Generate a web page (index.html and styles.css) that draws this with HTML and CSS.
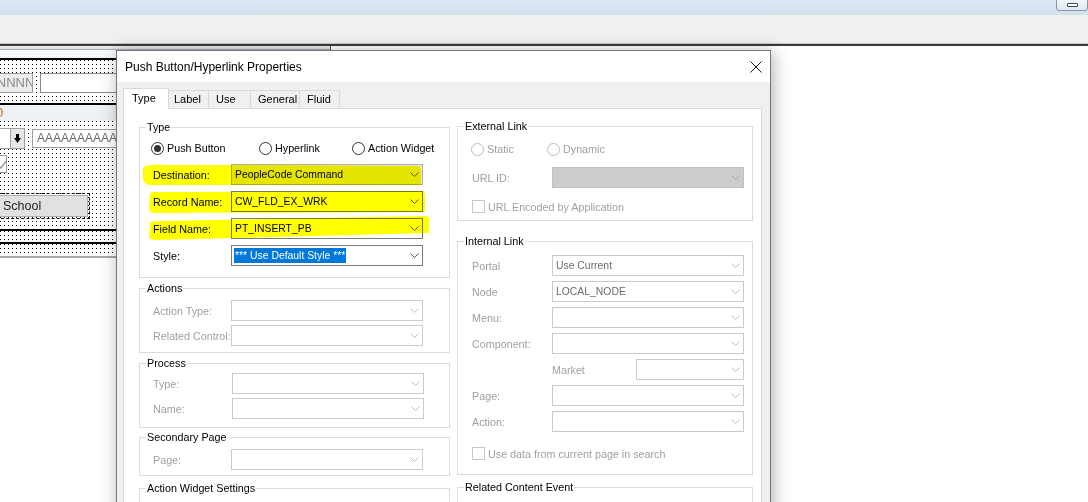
FILE: index.html
```html
<!DOCTYPE html>
<html>
<head>
<meta charset="utf-8">
<link rel="stylesheet" href="styles.css">
</head>
<body>
<div class="topbar"><div class="winbtn"><span class="winbtn-icon"></span></div></div>
<div class="toolbar"></div>
<div class="workspace">
  <div class="canvas-win">
    <div class="canvas-head"></div>
    <div class="canvas-top"></div>
    <div class="hl"></div>
    <div class="dots dots-a">
      <div class="nbox">NNNNNNNN</div>
      <div class="ibox"></div>
    </div>
    <div class="hl"></div>
    <div class="band"><span class="zero">0</span></div>
    <div class="dots dots-b">
      <div class="ddrow">
        <div class="ddwhite"></div>
        <div class="ddbtn"><svg width="7" height="9" viewBox="0 0 7 9"><polygon points="2,0 5,0 5,4 7,4 3.5,9 0,4 2,4" fill="#000"/></svg></div>
        <div class="abox">AAAAAAAAAAAA</div>
      </div>
      <div class="chk"><svg width="18" height="16" viewBox="0 0 18 16"><polyline points="8,9 11,12 16,5" fill="none" stroke="#9a9a9a" stroke-width="1.4"/></svg></div>
      <div class="school-wrap"><div class="school">School</div></div>
    </div>
    <div class="hl"></div>
    <div class="dots dots-c"></div>
    <div class="hl"></div>
    <div class="dots dots-d"></div>
    <div class="canvas-bottom"></div>
  </div>
</div>

<div class="dialog">
  <div class="dlg-title">
    <span>Push Button/Hyperlink Properties</span>
    <svg class="close" width="12" height="12" viewBox="0 0 12 12"><path d="M0.5,0.5 L11.5,11.5 M11.5,0.5 L0.5,11.5" stroke="#1a1a1a" stroke-width="1" fill="none"/></svg>
  </div>
  <div class="dlg-body">
    <div class="tabs">
      <div class="tab active t-type">Type</div>
      <div class="tab t-label">Label</div>
      <div class="tab t-use">Use</div>
      <div class="tab t-general">General</div>
      <div class="tab t-fluid">Fluid</div>
    </div>
    <div class="tabpage">
      <div class="col col-l">
        <div class="group g-type">
          <span class="gtitle">Type</span>
          <div class="radios">
            <div class="radio r1"><span class="circ on"></span>Push Button</div>
            <div class="radio r2"><span class="circ"></span>Hyperlink</div>
            <div class="radio"><span class="circ"></span>Action Widget</div>
          </div>
          <div class="frow first">
            <span class="flabel">Destination:</span>
            <div class="sel sel-list"><span>PeopleCode Command</span><svg class="chev" width="9" height="5" viewBox="0 0 9 5"><polyline points="0.5,0.5 4.5,4.5 8.5,0.5" fill="none" stroke="#555" stroke-width="1"/></svg></div>
          </div>
          <div class="frow">
            <span class="flabel">Record Name:</span>
            <div class="sel"><span>CW_FLD_EX_WRK</span><svg class="chev" width="9" height="5" viewBox="0 0 9 5"><polyline points="0.5,0.5 4.5,4.5 8.5,0.5" fill="none" stroke="#555" stroke-width="1"/></svg></div>
          </div>
          <div class="frow">
            <span class="flabel">Field Name:</span>
            <div class="sel"><span>PT_INSERT_PB</span><svg class="chev" width="9" height="5" viewBox="0 0 9 5"><polyline points="0.5,0.5 4.5,4.5 8.5,0.5" fill="none" stroke="#555" stroke-width="1"/></svg></div>
          </div>
          <div class="frow">
            <span class="flabel">Style:</span>
            <div class="sel"><span class="picked">*** Use Default Style ***</span><svg class="chev" width="9" height="5" viewBox="0 0 9 5"><polyline points="0.5,0.5 4.5,4.5 8.5,0.5" fill="none" stroke="#555" stroke-width="1"/></svg></div>
          </div>
        </div>

        <div class="group g-actions">
          <span class="gtitle">Actions</span>
          <div class="frow dis">
            <span class="flabel">Action Type:</span>
            <div class="sel off"><span></span><svg class="chev" width="9" height="5" viewBox="0 0 9 5"><polyline points="0.5,0.5 4.5,4.5 8.5,0.5" fill="none" stroke="#bdbdbd" stroke-width="1"/></svg></div>
          </div>
          <div class="frow dis tight">
            <span class="flabel">Related Control:</span>
            <div class="sel off"><span></span><svg class="chev" width="9" height="5" viewBox="0 0 9 5"><polyline points="0.5,0.5 4.5,4.5 8.5,0.5" fill="none" stroke="#bdbdbd" stroke-width="1"/></svg></div>
          </div>
        </div>

        <div class="group g-process">
          <span class="gtitle">Process</span>
          <div class="frow dis shift">
            <span class="flabel">Type:</span>
            <div class="sel off"><span></span><svg class="chev" width="9" height="5" viewBox="0 0 9 5"><polyline points="0.5,0.5 4.5,4.5 8.5,0.5" fill="none" stroke="#bdbdbd" stroke-width="1"/></svg></div>
          </div>
          <div class="frow dis shift tight">
            <span class="flabel">Name:</span>
            <div class="sel off"><span></span><svg class="chev" width="9" height="5" viewBox="0 0 9 5"><polyline points="0.5,0.5 4.5,4.5 8.5,0.5" fill="none" stroke="#bdbdbd" stroke-width="1"/></svg></div>
          </div>
        </div>

        <div class="group g-secondary">
          <span class="gtitle">Secondary Page</span>
          <div class="frow dis">
            <span class="flabel">Page:</span>
            <div class="sel off"><span></span><svg class="chev" width="9" height="5" viewBox="0 0 9 5"><polyline points="0.5,0.5 4.5,4.5 8.5,0.5" fill="none" stroke="#bdbdbd" stroke-width="1"/></svg></div>
          </div>
        </div>

        <div class="group g-widget">
          <span class="gtitle">Action Widget Settings</span>
        </div>
      </div>

      <div class="col col-r">
        <div class="group g-external">
          <span class="gtitle">External Link</span>
          <div class="radios r-ext dis">
            <div class="radio r-static"><span class="circ off"></span>Static</div>
            <div class="radio"><span class="circ off"></span>Dynamic</div>
          </div>
          <div class="frow dis rrow url">
            <span class="flabel">URL ID:</span>
            <div class="sel grey"><span></span><svg class="chev" width="9" height="5" viewBox="0 0 9 5"><polyline points="0.5,0.5 4.5,4.5 8.5,0.5" fill="none" stroke="#a8a8a8" stroke-width="1"/></svg></div>
          </div>
          <div class="crow dis c-ext"><span class="cbox"></span>URL Encoded by Application</div>
        </div>

        <div class="group g-internal">
          <span class="gtitle">Internal Link</span>
          <div class="frow dis rrow">
            <span class="flabel">Portal</span>
            <div class="sel off"><span class="val">Use Current</span><svg class="chev" width="9" height="5" viewBox="0 0 9 5"><polyline points="0.5,0.5 4.5,4.5 8.5,0.5" fill="none" stroke="#bdbdbd" stroke-width="1"/></svg></div>
          </div>
          <div class="frow dis rrow gap5">
            <span class="flabel">Node</span>
            <div class="sel off"><span class="val">LOCAL_NODE</span><svg class="chev" width="9" height="5" viewBox="0 0 9 5"><polyline points="0.5,0.5 4.5,4.5 8.5,0.5" fill="none" stroke="#bdbdbd" stroke-width="1"/></svg></div>
          </div>
          <div class="frow dis rrow gap5">
            <span class="flabel">Menu:</span>
            <div class="sel off"><span></span><svg class="chev" width="9" height="5" viewBox="0 0 9 5"><polyline points="0.5,0.5 4.5,4.5 8.5,0.5" fill="none" stroke="#bdbdbd" stroke-width="1"/></svg></div>
          </div>
          <div class="frow dis rrow gap5">
            <span class="flabel">Component:</span>
            <div class="sel off"><span></span><svg class="chev" width="9" height="5" viewBox="0 0 9 5"><polyline points="0.5,0.5 4.5,4.5 8.5,0.5" fill="none" stroke="#bdbdbd" stroke-width="1"/></svg></div>
          </div>
          <div class="frow dis rrow gap5">
            <span class="flabel"></span>
            <span class="mlabel">Market</span>
            <div class="sel off small"><span></span><svg class="chev" width="9" height="5" viewBox="0 0 9 5"><polyline points="0.5,0.5 4.5,4.5 8.5,0.5" fill="none" stroke="#bdbdbd" stroke-width="1"/></svg></div>
          </div>
          <div class="frow dis rrow gap5">
            <span class="flabel">Page:</span>
            <div class="sel off"><span></span><svg class="chev" width="9" height="5" viewBox="0 0 9 5"><polyline points="0.5,0.5 4.5,4.5 8.5,0.5" fill="none" stroke="#bdbdbd" stroke-width="1"/></svg></div>
          </div>
          <div class="frow dis rrow gap5">
            <span class="flabel">Action:</span>
            <div class="sel off"><span></span><svg class="chev" width="9" height="5" viewBox="0 0 9 5"><polyline points="0.5,0.5 4.5,4.5 8.5,0.5" fill="none" stroke="#bdbdbd" stroke-width="1"/></svg></div>
          </div>
          <div class="crow dis c-int"><span class="cbox"></span>Use data from current page in search</div>
        </div>

        <div class="group g-related">
          <span class="gtitle">Related Content Event</span>
        </div>
      </div>
    </div>
  </div>
</div>

<svg class="marker" width="1088" height="502" viewBox="0 0 1088 502">
  <path d="M143,168 Q146,164 160,165 L232,165 L418,166 Q422,167 421,172 L421,185 L150,185 Q143,184 143,178 Z" fill="#ffff00"/>
  <path d="M150,194 Q151,191 160,192 L423,191 Q425,192 425,196 L425,212 L153,213 Q149,212 149,208 Z" fill="#ffff00"/>
  <path d="M150,223 Q150,221 158,221 L427,216 Q429,217 429,220 L429,233 L156,240 Q149,240 149,236 Z" fill="#ffff00"/>
</svg>
</body>
</html>
```

FILE: styles.css
```css
* { box-sizing: border-box; }
html, body { margin: 0; padding: 0; }
body {
  width: 1088px;
  height: 502px;
  overflow: hidden;
  position: relative;
  background: #fff;
  font-family: "Liberation Sans", Arial, sans-serif;
  color: #000;
}

/* ---------- host window chrome ---------- */
.topbar {
  height: 15px;
  background: linear-gradient(#dfe8f4, #d4dfee);
  display: flex;
  justify-content: flex-end;
}
.winbtn {
  width: 32px;
  height: 12px;
  margin-top: -1px;
  border: 1px solid #8596ad;
  border-radius: 0 0 3px 3px;
  background: linear-gradient(#f5f8fc, #dfe7f1);
  display: flex;
  justify-content: center;
  padding-top: 3px;
}
.winbtn-icon {
  width: 11px;
  height: 4px;
  border: 1px solid #3e4b5e;
  border-radius: 1px;
  background: #fff;
}
.toolbar {
  height: 29px;
  background: #f0f0f0;
  border-bottom: 1px solid #c5c5c5;
}
.workspace {
  border-top: 2px solid #3b3b3b;
  display: flex;
}

/* ---------- page designer canvas ---------- */
.canvas-win {
  width: 331px;
  border-right: 1px solid #5a5a5a;
  display: flex;
  flex-direction: column;
}
.canvas-head {
  height: 4px;
  background: linear-gradient(#eef1f4, #d9dee4);
  border-bottom: 1px solid #a9b0b8;
}
.canvas-top { height: 8px; background: #f6f8fa; }
.hl { height: 2px; background: #000; }
.dots {
  background-color: #fff;
  background-image: conic-gradient(from 270deg at 1px 1px, #000 90deg, transparent 0);
  background-size: 4px 4px;
}
.dots-a {
  height: 43px;
  padding-top: 13px;
  display: flex;
  align-items: flex-start;
}
.nbox {
  margin-left: -24px;
  width: 57px;
  height: 20px;
  border: 1px solid #9a9a9a;
  background: #ececec;
  color: #8a8a8a;
  font-size: 13px;
  line-height: 18px;
  overflow: hidden;
  white-space: nowrap;
  padding-left: 1px;
}
.ibox {
  margin-left: 7px;
  width: 120px;
  height: 20px;
  border: 1px solid #8a8a8a;
  background: #fff;
}
.band {
  height: 16px;
  background: #eef1f4;
  font-size: 13px;
  line-height: 16px;
  color: #c0661f;
}
.zero { margin-left: -4px; }
.dots-b {
  height: 108px;
  padding-top: 7px;
  display: flex;
  flex-direction: column;
  align-items: flex-start;
}
.ddrow { display: flex; height: 21px; }
.ddwhite {
  margin-left: -20px;
  width: 30px;
  height: 21px;
  border: 1px solid #a0a0a0;
  border-right: none;
  background: #fff;
}
.ddbtn {
  width: 15px;
  height: 21px;
  border: 1px solid #a0a0a0;
  background: #e6e6e6;
  display: flex;
  align-items: center;
  justify-content: center;
}
.abox {
  margin-left: 7px;
  margin-top: 1px;
  width: 100px;
  height: 19px;
  border: 1px solid #a0a0a0;
  background: #fff;
  color: #6e6e6e;
  font-size: 12px;
  line-height: 17px;
  padding-left: 4px;
  white-space: nowrap;
  overflow: hidden;
}
.chk {
  margin-top: 6px;
  margin-left: -11px;
  width: 18px;
  height: 18px;
  border: 1px solid #9a9a9a;
  background: #fff;
}
.school-wrap {
  margin-top: 20px;
  margin-left: -4px;
  width: 94px;
  height: 26px;
  border: 1px dashed #000;
  padding: 1px;
}
.school {
  width: 89px;
  height: 22px;
  margin-left: 1px;
  border: 1px solid #adadad;
  background: #e1e1e1;
  font-size: 12.5px;
  line-height: 20px;
  padding-left: 3px;
  color: #1e1e1e;
}
.dots-c { height: 11px; }
.dots-d { height: 12px; }
.canvas-bottom { height: 2px; background: #a8a8a8; }

/* ---------- dialog ---------- */
.dialog {
  position: absolute;
  left: 116px;
  top: 50px;
  width: 655px;
  height: 470px;
  border: 1px solid #767676;
  background: #f0f0f0;
  box-shadow: 2px 2px 16px rgba(0, 0, 0, 0.32);
}
.dlg-title {
  height: 31px;
  background: #fff;
  display: flex;
  align-items: center;
  justify-content: space-between;
  padding: 0 8px;
  font-size: 12px;
}
.dlg-body {
  padding: 6px 0 0 6px;
  font-size: 10.75px;
}
.tabs {
  display: flex;
  align-items: flex-end;
  height: 20px;
  position: relative;
  z-index: 1;
}
.tab {
  height: 18px;
  border: 1px solid #d9d9d9;
  border-bottom: none;
  background: #f0f0f0;
  line-height: 16px;
  padding-left: 7px;
  margin-left: -1px;
  white-space: nowrap;
  font-size: 11px;
}
.tab.active {
  height: 21px;
  margin-bottom: -1px;
  margin-left: 0;
  background: #fff;
  line-height: 18px;
  padding-left: 8px;
}
.t-type { width: 46px; }
.t-label { width: 41px; padding-left: 5px; }
.t-use { width: 43px; }
.t-general { width: 50px; }
.t-fluid { width: 41px; }
.tabpage {
  width: 639px;
  height: 420px;
  border: 1px solid #d9d9d9;
  background: #fff;
  display: flex;
  align-items: flex-start;
  gap: 7px;
  padding: 18px 0 0 15px;
}
.col { display: flex; flex-direction: column; }
.col-l { width: 311px; }
.col-r { width: 296px; margin-top: -1px; }

.group {
  position: relative;
  border: 1px solid #dcdcdc;
}
.gtitle {
  position: absolute;
  top: -7px;
  left: 6px;
  padding: 0 1px;
  background: #fff;
  line-height: 13px;
  white-space: nowrap;
}
.g-type { padding: 12px 0 11px; }
.g-actions { margin-top: 10px; padding: 11px 0 6px; }
.g-process { margin-top: 10px; padding: 9px 0 8px; }
.g-secondary { margin-top: 9px; padding: 11px 0 5px; }
.g-widget { margin-top: 12px; height: 60px; }
.g-external { padding: 14px 0 7px; }
.g-internal { margin-top: 20px; padding: 13px 0 14px; }
.g-related { margin-top: 12px; height: 60px; }

.radios {
  display: flex;
  align-items: center;
  height: 16px;
  padding-left: 11px;
  white-space: nowrap;
}
.radio { display: flex; align-items: center; }
.r1 { width: 108px; }
.r2 { width: 93px; }
.r-ext { padding-left: 13px; }
.r-static { width: 76px; }
.circ {
  width: 13px;
  height: 13px;
  border: 1px solid #333;
  border-radius: 50%;
  margin-right: 3px;
  display: flex;
  align-items: center;
  justify-content: center;
  background: #fff;
}
.circ.on::after {
  content: "";
  width: 7px;
  height: 7px;
  border-radius: 50%;
  background: #333;
}
.circ.off { border-color: #bcbcbc; }

.frow {
  display: flex;
  align-items: center;
  height: 21px;
  padding-left: 13px;
  margin-top: 6px;
  white-space: nowrap;
}
.frow.first { margin-top: 8px; }
.g-actions .frow:first-of-type,
.g-process .frow:first-of-type,
.g-secondary .frow:first-of-type { margin-top: 0; }
.frow.tight { margin-top: 4px; }
.flabel { width: 78px; flex-shrink: 0; }
.shift .flabel { width: 79px; }
.sel {
  width: 192px;
  height: 21px;
  flex-shrink: 0;
  border: 1px solid #7a7a7a;
  background: #fff;
  display: flex;
  align-items: center;
  justify-content: space-between;
  padding: 0 3px 0 3px;
  font-size: 10.4px;
  white-space: nowrap;
}
.sel-list { background: #e5e5e5; border-color: #adadad; }
.sel.off { border-color: #cbcbcb; }
.sel.grey { background: #cccccc; border-color: #c0c0c0; }
.sel.small { width: 108px; }
.picked {
  background: #0078d7;
  color: #fff;
  line-height: 15px;
  padding: 0 1px;
  margin-left: -1px;
}
.val { color: #6a6a6a; }
.dis { color: #a0a0a0; }

.rrow { padding-left: 14px; margin-top: 0; }
.rrow .flabel { width: 80px; }
.rrow.url { margin-top: 10px; }
.rrow.gap5 { margin-top: 5px; }
.mlabel { width: 84px; flex-shrink: 0; }

.crow {
  display: flex;
  align-items: center;
  height: 13px;
  padding-left: 14px;
  white-space: nowrap;
}
.c-ext { margin-top: 12px; }
.c-int { margin-top: 15px; padding-left: 14px; }
.cbox {
  width: 13px;
  height: 13px;
  border: 1px solid #c8c8c8;
  background: #fff;
  margin-right: 3px;
  flex-shrink: 0;
}

/* highlighter marks drawn over the dialog */
.marker {
  position: absolute;
  left: 0;
  top: 0;
  pointer-events: none;
  mix-blend-mode: multiply;
  z-index: 5;
}
```
